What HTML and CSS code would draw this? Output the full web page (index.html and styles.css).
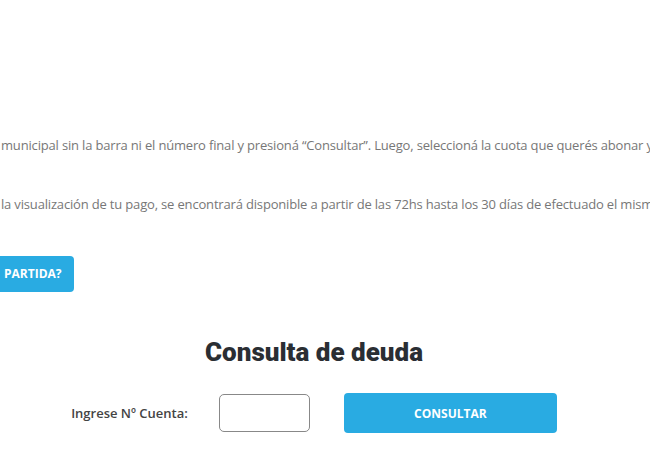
FILE: index.html
```html
<!DOCTYPE html>
<html lang="es">
<head>
  <meta charset="UTF-8">
  <title>Consulta de deuda</title>
  <meta name="viewport" content="width=device-width, initial-scale=1.0">
  <link rel="stylesheet" href="styles.css">
</head>
<body>
  <div class="page">
    <section class="intro">
      <p class="info">municipal sin la barra ni el número final y presioná “Consultar”. Luego, seleccioná la cuota que querés abonar y</p>
      <p class="info">la visualización de tu pago, se encontrará disponible a partir de las 72hs hasta los 30 días de efectuado el mismo.</p>
      <div class="help">
        <a class="btn btn-help" href="#">PARTIDA?</a>
      </div>
    </section>

    <section class="debt">
      <h2>Consulta de deuda</h2>
      <form class="debt-form" id="debtForm">
        <label for="cuenta">Ingrese Nº Cuenta:</label>
        <input type="text" id="cuenta">
        <button type="submit" class="btn btn-submit">CONSULTAR</button>
      </form>
    </section>
  </div>
</body>
</html>
```

FILE: styles.css
```css
:root {
  --accent-color: #29abe2;
  --text-color: #777;
  --title-color: #2a2e33;
}

* {
  box-sizing: border-box;
}

html, body {
  overflow: hidden;
}

body {
  margin: 0;
  background: #fff;
  font-family: "Open Sans", sans-serif;
  color: var(--text-color);
}

.page {
  width: 628px;
  padding-top: 135px;
}

.info {
  margin: 0 0 38px 1px;
  font-size: 13px;
  line-height: 21px;
  letter-spacing: -0.17px;
  white-space: nowrap;
}

.help {
  display: flex;
  padding-top: 3px;
}

.btn {
  background-color: var(--accent-color);
  color: #fff;
  border: none;
  border-radius: 4px;
  font-weight: bold;
  text-decoration: none;
  font-family: "Open Sans", sans-serif;
}

.btn-help {
  display: inline-block;
  margin-left: -8px;
  padding: 0 12px;
  height: 36px;
  line-height: 36px;
  font-size: 12px;
}

.debt {
  text-align: center;
  margin-top: 45px;
}

.debt h2 {
  margin: 0 0 26px;
  font-family: Roboto, sans-serif;
  font-weight: 900;
  font-size: 26px;
  color: var(--title-color);
}

.debt-form {
  display: flex;
  justify-content: center;
  align-items: center;
}

.debt-form label {
  font-size: 13px;
  font-weight: 600;
  color: #444;
  margin-right: 31px;
}

.debt-form input {
  width: 91px;
  height: 38px;
  border: 1px solid #888;
  border-radius: 5px;
  margin-right: 34px;
}

.btn-submit {
  width: 213px;
  height: 40px;
  font-size: 12px;
  cursor: pointer;
}
```
